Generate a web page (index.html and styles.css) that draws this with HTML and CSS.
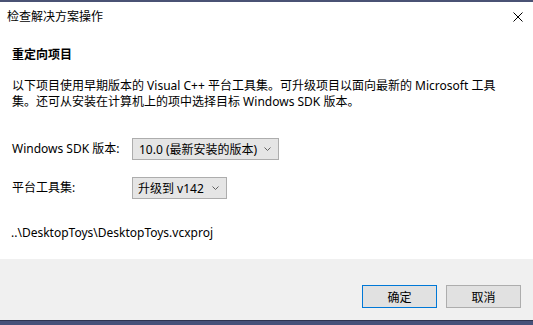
FILE: index.html
```html
<!DOCTYPE html>
<html lang="zh-CN">
<head>
  <meta charset="UTF-8">
  <title>检查解决方案操作</title>
  <link rel="stylesheet" href="styles.css">
</head>
<body>
  <div class="edge-top"></div>
  <div class="dialog">
    <div class="titlebar">
      <span class="title">检查解决方案操作</span>
      <svg class="close" width="10" height="10" viewBox="0 0 10 10">
        <path d="M0.5 0.5 L9.5 9.5 M9.5 0.5 L0.5 9.5" stroke="#000" stroke-width="1" fill="none"/>
      </svg>
    </div>

    <div class="content">
      <h3 class="heading">重定向项目</h3>
      <p class="desc">以下项目使用早期版本的 Visual C++ 平台工具集。可升级项目以面向最新的 Microsoft 工具集。还可从安装在计算机上的项中选择目标 Windows SDK 版本。</p>

      <div class="row row-sdk">
        <label class="label">Windows SDK 版本:</label>
        <div class="combo combo-sdk">
          <span>10.0 (最新安装的版本)</span>
          <svg class="chev" width="7" height="4" viewBox="0 0 7 4"><path d="M0.5 0.5 L3.5 3.5 L6.5 0.5" stroke="#606060" fill="none"/></svg>
        </div>
      </div>

      <div class="row row-tool">
        <label class="label">平台工具集:</label>
        <div class="combo combo-tool">
          <span>升级到 v142</span>
          <svg class="chev" width="7" height="4" viewBox="0 0 7 4"><path d="M0.5 0.5 L3.5 3.5 L6.5 0.5" stroke="#606060" fill="none"/></svg>
        </div>
      </div>

      <div class="path">..\DesktopToys\DesktopToys.vcxproj</div>
    </div>

    <div class="footer">
      <button class="btn btn-default">确定</button>
      <button class="btn">取消</button>
    </div>
  </div>
  <div class="edge-bottom"></div>
</body>
</html>
```

FILE: styles.css
```css
body {
  margin: 0;
  width: 533px;
  height: 325px;
  overflow: hidden;
  display: flex;
  flex-direction: column;
  font-family: "Noto Sans", "Noto Sans CJK SC", sans-serif;
  font-size: 12px;
  color: #000;
  background-color: #fff;
}

.edge-top {
  height: 2px;
  background-color: #4a5274;
}

.dialog {
  flex-grow: 1;
  display: flex;
  flex-direction: column;
  background-color: #fff;
}

.titlebar {
  height: 30px;
  display: flex;
  align-items: center;
  justify-content: space-between;
  padding: 0 10px 0 7px;
}

.title {
  line-height: 16px;
}

.close {
  display: block;
}

.content {
  flex-grow: 1;
  padding: 15px 0 0 12px;
}

.heading {
  margin: 0;
  font-size: 12px;
  font-weight: bold;
  line-height: 16px;
}

.desc {
  margin: 15px 0 0 0;
  width: 492px;
  line-height: 16px;
}

.row {
  display: flex;
  align-items: center;
}

.row-sdk {
  margin-top: 28px;
}

.row-tool {
  margin-top: 17px;
}

.label {
  width: 120px;
  line-height: 16px;
}

.combo {
  height: 22px;
  box-sizing: border-box;
  border: 1px solid #adadad;
  background-color: #e5e5e5;
  display: flex;
  align-items: center;
  justify-content: space-between;
  padding: 0 7px 0 6px;
}

.combo-sdk {
  width: 147px;
}

.combo-tool {
  width: 95px;
  padding-left: 5px;
}

.chev {
  display: block;
}

.path {
  margin-top: 26px;
  margin-left: -1px;
  line-height: 16px;
}

.footer {
  height: 61px;
  box-sizing: border-box;
  background-color: #f0f0f0;
  display: flex;
  justify-content: flex-end;
  align-items: flex-end;
  gap: 9px;
  padding: 0 12px 12px 0;
}

.btn {
  width: 75px;
  height: 23px;
  box-sizing: border-box;
  border: 1px solid #adadad;
  background-color: #e1e1e1;
  font-family: "Noto Sans", "Noto Sans CJK SC", sans-serif;
  font-size: 12px;
  color: #000;
  padding: 0;
}

.btn-default {
  border-color: #0078d7;
}

.edge-bottom {
  height: 5px;
  background-color: #46517a;
  border-top: 1px solid #2e3450;
  box-sizing: border-box;
}
```
